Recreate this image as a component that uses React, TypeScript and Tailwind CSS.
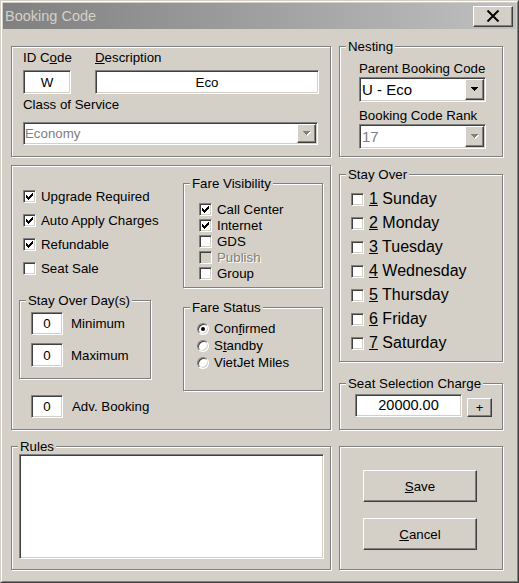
import type { ReactNode } from 'react';

const sunken =
  'border border-t-[#808080] border-l-[#808080] border-b-white border-r-white shadow-[inset_1px_1px_0_#404040,inset_-1px_-1px_0_#d4d0c8]';
const raised =
  'border border-t-white border-l-white border-b-[#404040] border-r-[#404040] shadow-[inset_-1px_-1px_0_#808080,inset_1px_1px_0_#d4d0c8] bg-[#d4d0c8]';

const Group = ({
  title,
  className,
  children,
}: {
  title?: string;
  className?: string;
  children?: ReactNode;
}) => (
  <div
    className={`relative shrink-0 border border-[#808080] shadow-[1px_1px_0_#fff,inset_1px_1px_0_#fff] ${className ?? ''}`}>
    {title && (
      <span className="absolute left-[6px] top-[-8px] bg-[#d4d0c8] px-[2px] leading-[15px]">
        {title}
      </span>
    )}
    {children}
  </div>
);

const Check = ({ checked, disabled }: { checked?: boolean; disabled?: boolean }) => (
  <span
    className={`${sunken} flex h-[13px] w-[13px] shrink-0 items-center justify-center ${
      disabled ? 'bg-[#d4d0c8]' : 'bg-white'
    }`}>
    {checked && (
      <svg width="7" height="7" viewBox="0 0 7 7" shapeRendering="crispEdges">
        <path
          d="M6 0h1v1h-1z M5 1h2v1h-2z M0 2h1v1h-1z M4 2h3v1h-3z M0 3h2v1h-2z M3 3h3v1h-3z M0 4h5v1h-5z M1 5h3v1h-3z M2 6h1v1h-1z"
          fill="#000"
        />
      </svg>
    )}
  </span>
);

const Radio = ({ checked }: { checked?: boolean }) => (
  <span className="flex h-[12px] w-[12px] shrink-0 items-center justify-center rounded-full border border-t-[#808080] border-l-[#808080] border-b-white border-r-white bg-white shadow-[inset_1px_1px_0_#404040,inset_-1px_-1px_0_#d4d0c8]">
    {checked && <span className="h-[4px] w-[4px] rounded-full bg-black" />}
  </span>
);

const Arrow = ({ disabled }: { disabled?: boolean }) => (
  <svg width="8" height="5" viewBox="0 0 8 5" shapeRendering="crispEdges">
    {disabled && (
      <path d="M1 1h7v1H1z M2 2h5v1H2z M3 3h3v1H3z M4 4h1v1H4z" fill="#fff" />
    )}
    <path
      d="M0 0h7v1H0z M1 1h5v1H1z M2 2h3v1H2z M3 3h1v1H3z"
      fill={disabled ? '#808080' : '#000'}
    />
  </svg>
);

const Combo = ({
  value,
  disabled,
  className,
  textClass,
}: {
  value: string;
  disabled?: boolean;
  className?: string;
  textClass?: string;
}) => (
  <div className={`${sunken} flex bg-white ${className ?? ''}`}>
    <span
      className={`flex flex-1 items-center ${disabled ? 'text-[#808080]' : ''} ${textClass ?? ''}`}>
      {value}
    </span>
    <span className={`${raised} my-[1px] mr-[1px] flex w-[19px] items-center justify-center`}>
      <Arrow disabled={disabled} />
    </span>
  </div>
);

const Field = ({ value, className }: { value?: string; className?: string }) => (
  <div className={`${sunken} flex items-center justify-center bg-white ${className ?? ''}`}>
    {value}
  </div>
);

const options = [
  { label: 'Upgrade Required', checked: true },
  { label: 'Auto Apply Charges', checked: true },
  { label: 'Refundable', checked: true },
  { label: 'Seat Sale', checked: false },
];

const visibility = [
  { label: 'Call Center', checked: true },
  { label: 'Internet', checked: true },
  { label: 'GDS', checked: false },
  { label: 'Publish', checked: false, disabled: true },
  { label: 'Group', checked: false },
];

const days = ['Sunday', 'Monday', 'Tuesday', 'Wednesday', 'Thursday', 'Friday', 'Saturday'];

export default function App() {
  return (
    <div className="h-[583px] w-[519px] whitespace-nowrap border border-t-[#d4d0c8] border-l-[#d4d0c8] border-b-[#404040] border-r-[#404040] bg-[#d4d0c8] font-['Liberation_Sans',Arial,sans-serif] text-[13.3px] leading-[15px] text-black">
      <div className="flex h-full flex-col border border-t-white border-l-white border-b-[#808080] border-r-[#808080] p-[1px]">
        {/* Title bar */}
        <div className="flex h-[26px] shrink-0 items-center justify-between bg-linear-to-r from-[#808080] to-[#c0c0c0] pl-[2px] pr-[3px]">
          <span className="text-[14.5px] leading-[18px] text-[#d4d0c8]">Booking Code</span>
          <button className={`${raised} flex h-[21px] w-[40px] items-center justify-center`}>
            <svg width="14" height="12" viewBox="0 0 14 12">
              <path d="M1.5 0.5 L12.5 11.5 M12.5 0.5 L1.5 11.5" stroke="#000" strokeWidth="2" />
            </svg>
          </button>
        </div>

        <div className="flex flex-col pl-[8px] pt-[17px]">
          {/* Row 1 */}
          <div className="flex gap-[8px]">
            <Group className="h-[111px] w-[320px] pl-[11px] pt-[3px]">
              <div className="flex gap-[24px]">
                <div className="flex w-[48px] flex-col">
                  <span>
                    ID C<span className="underline">o</span>de
                  </span>
                  <Field value="W" className="mt-[5px] h-[24px] w-[48px]" />
                </div>
                <div className="flex w-[224px] flex-col">
                  <span>
                    <span className="underline">D</span>escription
                  </span>
                  <Field value="Eco" className="mt-[5px] h-[24px] w-[224px]" />
                </div>
              </div>
              <div className="mt-[3px]">Class of Service</div>
              <Combo
                value="Economy"
                disabled
                className="mt-[10px] h-[23px] w-[295px]"
                textClass="pl-[1px]"
              />
            </Group>

            <Group title="Nesting" className="h-[111px] w-[164px] pl-[19px] pt-[14px]">
              <div>Parent Booking Code</div>
              <Combo
                value="U - Eco"
                className="mt-[1px] h-[25px] w-[127px]"
                textClass="pl-[2px] text-[15px]"
              />
              <div className="mt-[6px]">Booking Code Rank</div>
              <Combo
                value="17"
                disabled
                className="mt-[1px] h-[25px] w-[127px]"
                textClass="pl-[2px] text-[15px]"
              />
            </Group>
          </div>

          {/* Row 2 */}
          <div className="mt-[8px] flex items-start gap-[8px]">
            <Group className="flex h-[265px] w-[320px] pl-[7px]">
              <div className="flex w-[132px] flex-col">
                <div className="ml-[4px] mt-[23px] flex flex-col gap-[9px]">
                  {options.map((o) => (
                    <div key={o.label} className="flex h-[15px] items-center">
                      <Check checked={o.checked} />
                      <span className="ml-[5px]">{o.label}</span>
                    </div>
                  ))}
                </div>

                <Group
                  title="Stay Over Day(s)"
                  className="mt-[24px] h-[79px] w-[132px] pl-[11px] pt-[11px]">
                  <div className="flex items-center">
                    <Field value="0" className="h-[23px] w-[32px]" />
                    <span className="ml-[8px]">Minimum</span>
                  </div>
                  <div className="mt-[8px] flex items-center">
                    <Field value="0" className="h-[24px] w-[32px]" />
                    <span className="ml-[8px]">Maximum</span>
                  </div>
                </Group>

                <div className="ml-[12px] mt-[16px] flex items-center">
                  <Field value="0" className="h-[23px] w-[32px]" />
                  <span className="ml-[9px]">Adv. Booking</span>
                </div>
              </div>

              <div className="ml-[32px] flex flex-col">
                <Group
                  title="Fare Visibility"
                  className="mt-[17px] h-[105px] w-[140px] pl-[15px] pt-[17px]">
                  {visibility.map((v) => (
                    <div key={v.label} className="flex h-[16px] items-center">
                      <Check checked={v.checked} disabled={v.disabled} />
                      <span
                        className={`ml-[5px] ${
                          v.disabled ? 'text-[#808080] [text-shadow:1px_1px_0_#fff]' : ''
                        }`}>
                        {v.label}
                      </span>
                    </div>
                  ))}
                </Group>

                <Group
                  title="Fare Status"
                  className="mt-[19px] h-[84px] w-[140px] pl-[13px] pt-[12px]">
                  <div className="flex h-[17px] items-center">
                    <Radio checked />
                    <span className="ml-[5px]">
                      Con<span className="underline">f</span>irmed
                    </span>
                  </div>
                  <div className="flex h-[17px] items-center">
                    <Radio />
                    <span className="ml-[5px]">
                      S<span className="underline">t</span>andby
                    </span>
                  </div>
                  <div className="flex h-[17px] items-center">
                    <Radio />
                    <span className="ml-[5px]">VietJet Miles</span>
                  </div>
                </Group>
              </div>
            </Group>

            <div className="flex flex-col">
              <Group title="Stay Over" className="mt-[9px] h-[188px] w-[164px] pl-[11px] pt-[12px]">
                {days.map((d, i) => (
                  <div key={d} className="flex h-[24px] items-center">
                    <Check />
                    <span className="ml-[5px] text-[16px] leading-[18px]">
                      <span className="underline">{i + 1}</span> {d}
                    </span>
                  </div>
                ))}
              </Group>

              <Group
                title="Seat Selection Charge"
                className="mt-[21px] h-[47px] w-[164px] pl-[15px] pt-[10px]">
                <div className="flex items-end">
                  <Field value="20000.00" className="h-[23px] w-[107px] text-[14.5px]" />
                  <button
                    className={`${raised} ml-[5px] flex h-[19px] w-[25px] items-center justify-center text-[13px] leading-none`}>
                    +
                  </button>
                </div>
              </Group>
            </div>
          </div>

          {/* Row 3 */}
          <div className="mt-[16px] flex gap-[8px]">
            <Group title="Rules" className="h-[124px] w-[320px] pl-[7px] pt-[7px]">
              <div className={`${sunken} h-[105px] w-[305px] bg-white`} />
            </Group>

            <Group className="h-[124px] w-[164px] pl-[23px] pt-[23px]">
              <button className={`${raised} flex h-[32px] w-[114px] items-center justify-center`}>
                <span>
                  <span className="underline">S</span>ave
                </span>
              </button>
              <button
                className={`${raised} mt-[16px] flex h-[32px] w-[114px] items-center justify-center`}>
                <span>
                  <span className="underline">C</span>ancel
                </span>
              </button>
            </Group>
          </div>
        </div>
      </div>
    </div>
  );
}
